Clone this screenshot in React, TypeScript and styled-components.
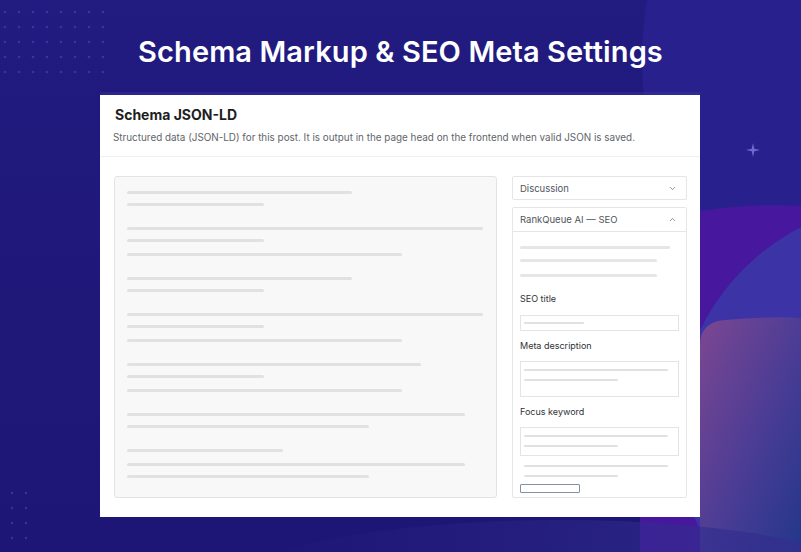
import React from 'react';
import styled, { createGlobalStyle } from 'styled-components';
import { ChevronDown, ChevronUp } from 'lucide-react';

const GlobalStyle = createGlobalStyle`
  * { box-sizing: border-box; }
  body {
    margin: 0;
    background: #1f1879;
    font-family: Inter, "Liberation Sans", sans-serif;
  }
`;

const Page = styled.div`
  position: relative;
  width: 801px;
  height: 552px;
  overflow: hidden;
  background: linear-gradient(180deg, #221b80 0%, #1f1879 60%, #1d1676 100%);
`;

const Backdrop = styled.svg`
  position: absolute;
  inset: 0;
  width: 100%;
  height: 100%;
`;

const Content = styled.div`
  position: relative;
  display: flex;
  flex-direction: column;
  align-items: center;
  padding-top: 34px;
`;

const Title = styled.h1`
  margin: 0;
  color: #fff;
  font-family: Inter, "Liberation Sans", sans-serif;
  font-size: 29px;
  font-weight: 600;
  line-height: 36px;
  letter-spacing: 0.1px;
`;

const Card = styled.section`
  align-self: flex-start;
  width: 600px;
  margin: 25px 0 0 100px;
  background: #fff;
  box-shadow: 0 -3px 0 rgba(90, 90, 200, 0.18);
`;

const CardHead = styled.header`
  padding: 11px 15px 12px 15px;
  border-bottom: 1px solid #f0f0f3;
`;

const CardTitle = styled.h2`
  margin: 0;
  font-size: 14px;
  font-weight: 700;
  color: #1e1e1e;
  line-height: 18px;
`;

const CardText = styled.p`
  margin: 6px 0 0 -2px;
  font-size: 9.9px;
  color: #60656b;
  line-height: 14px;
`;

const CardBody = styled.div`
  display: flex;
  gap: 15px;
  padding: 19px 13px 19px 14px;
`;

const Editor = styled.div`
  width: 383px;
  height: 322px;
  background: #f8f8f8;
  border: 1px solid #e3e3e3;
  border-radius: 3px;
  padding: 14px 12px;
  display: flex;
  flex-direction: column;
  align-items: flex-start;
`;

const Bar = styled.div<{ $w: number; $gap: number; $h?: number; $tone?: string; $inset?: number }>`
  width: ${(p) => p.$w}px;
  height: ${(p) => p.$h ?? 3}px;
  margin-top: ${(p) => p.$gap}px;
  margin-left: ${(p) => p.$inset ?? 0}px;
  border-radius: 2px;
  background: ${(p) => p.$tone ?? '#e1e1e1'};
  flex-shrink: 0;
`;

const Sidebar = styled.aside`
  width: 175px;
  display: flex;
  flex-direction: column;
  gap: 7px;
`;

const Panel = styled.div<{ $grow?: boolean }>`
  border: 1px solid #e6e6e9;
  border-radius: 2px;
  ${(p) => (p.$grow ? 'flex: 1;' : '')}
  display: flex;
  flex-direction: column;
`;

const PanelHead = styled.div<{ $open?: boolean }>`
  height: 22px;
  display: flex;
  align-items: center;
  justify-content: space-between;
  padding: 0 9px 0 7px;
  font-size: 9.5px;
  color: #50555c;
  ${(p) => (p.$open ? 'height: 24px; border-bottom: 1px solid #e6e6e9;' : '')}
`;

const PanelBody = styled.div`
  padding: 14px 7px 0 7px;
  display: flex;
  flex-direction: column;
  align-items: flex-start;
`;

const Label = styled.div<{ $gap: number }>`
  margin-top: ${(p) => p.$gap}px;
  font-size: 9px;
  font-weight: 400;
  color: #2f3338;
  line-height: 12px;
`;

const Field = styled.div<{ $h: number; $gap: number }>`
  width: 159px;
  height: ${(p) => p.$h}px;
  margin-top: ${(p) => p.$gap}px;
  border: 1px solid #e4e4e8;
  padding: 0 3px;
  display: flex;
  flex-direction: column;
  align-items: flex-start;
`;

const Outline = styled.div`
  width: 60px;
  height: 9px;
  margin-top: 7px;
  border: 1px solid #8390a8;
  border-radius: 1px;
`;

const editorLines: [number, number][] = [
  [225, 0], [137, 9], [356, 21], [137, 9], [275, 11],
  [225, 21], [137, 9], [356, 21], [137, 9], [275, 11],
  [294, 21], [137, 9], [275, 11], [338, 21], [242, 9],
  [156, 21], [338, 11], [242, 9],
];

const Dots = ({ x, y, cols, rows }: { x: number; y: number; cols: number; rows: number }) => (
  <g fill="#4d4ab8" opacity="0.55">
    {Array.from({ length: rows }).map((_, r) =>
      Array.from({ length: cols }).map((__, c) => (
        <circle key={`${r}-${c}`} cx={x + c * 14} cy={y + r * 15} r={1.3} />
      ))
    )}
  </g>
);

const App: React.FC = () => {
  return (
    <Page>
      <GlobalStyle />
      <Backdrop viewBox="0 0 801 552">
        <defs>
          <linearGradient id="blush" x1="0" y1="0" x2="1" y2="1">
            <stop offset="0" stopColor="#7c4792" />
            <stop offset="0.55" stopColor="#4a3c95" />
            <stop offset="1" stopColor="#22378a" />
          </linearGradient>
          <linearGradient id="haze" x1="0" y1="0" x2="1" y2="0">
            <stop offset="0" stopColor="#2a2488" stopOpacity="0" />
            <stop offset="1" stopColor="#35308f" stopOpacity="0.9" />
          </linearGradient>
        </defs>
        <circle cx="1000" cy="60" r="358" fill="#28208c" />
        <path d="M640 222 C 700 208, 760 203, 801 206 L 801 552 L 640 552 Z" fill="#47189e" />
        <circle cx="905" cy="430" r="228" fill="#3b33a6" />
        <path d="M700 552 L 700 345 Q 700 322 725 320 Q 770 316 801 318 L 801 552 Z" fill="url(#blush)" />
        <ellipse cx="560" cy="590" rx="330" ry="70" fill="url(#haze)" />
        <path
          d="M753 143 L754.3 148.7 L760 150 L754.3 151.3 L753 157 L751.7 151.3 L746 150 L751.7 148.7 Z"
          fill="#6e6ad0"
        />
        <Dots x={5} y={12} cols={8} rows={5} />
        <Dots x={12} y={493} cols={2} rows={5} />
      </Backdrop>
      <Content>
        <Title>Schema Markup &amp; SEO Meta Settings</Title>
        <Card>
          <CardHead>
            <CardTitle>Schema JSON-LD</CardTitle>
            <CardText>
              Structured data (JSON-LD) for this post. It is output in the page head on the frontend when valid JSON is saved.
            </CardText>
          </CardHead>
          <CardBody>
            <Editor>
              {editorLines.map(([w, gap], i) => (
                <Bar key={i} $w={w} $gap={gap} />
              ))}
            </Editor>
            <Sidebar>
              <Panel>
                <PanelHead>
                  Discussion
                  <ChevronDown size={9} strokeWidth={2} color="#6b7078" />
                </PanelHead>
              </Panel>
              <Panel $grow>
                <PanelHead $open>
                  RankQueue AI — SEO
                  <ChevronUp size={9} strokeWidth={2} color="#6b7078" />
                </PanelHead>
                <PanelBody>
                  <Bar $w={150} $gap={0} $tone="#e6e6e6" />
                  <Bar $w={137} $gap={10} $tone="#e6e6e6" />
                  <Bar $w={137} $gap={12} $tone="#e6e6e6" />
                  <Label $gap={16}>SEO title</Label>
                  <Field $h={16} $gap={10}>
                    <Bar $w={60} $gap={6} $h={2} />
                  </Field>
                  <Label $gap={9}>Meta description</Label>
                  <Field $h={36} $gap={9}>
                    <Bar $w={144} $gap={7} $h={2} />
                    <Bar $w={94} $gap={8} $h={2} />
                  </Field>
                  <Label $gap={9}>Focus keyword</Label>
                  <Field $h={29} $gap={9}>
                    <Bar $w={144} $gap={7} $h={2} />
                    <Bar $w={94} $gap={8} $h={2} />
                  </Field>
                  <Bar $w={144} $gap={9} $h={2} $inset={4} />
                  <Bar $w={94} $gap={8} $h={2} $inset={4} />
                  <Outline />
                </PanelBody>
              </Panel>
            </Sidebar>
          </CardBody>
        </Card>
      </Content>
    </Page>
  );
};

export default App;
